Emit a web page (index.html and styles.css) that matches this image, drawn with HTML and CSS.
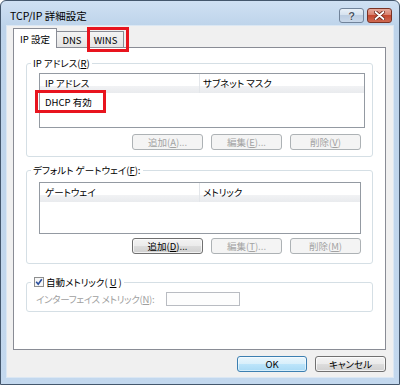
FILE: index.html
```html
<!DOCTYPE html>
<html lang="ja">
<head>
  <meta charset="UTF-8" />
  <title>TCP/IP 詳細設定</title>
  <link rel="stylesheet" href="styles.css">
</head>
<body>

  <div class="window">
    <div class="titlebar">
      <span class="title">TCP/IP 詳細設定</span>
      <div class="caption-buttons">
        <span class="cap-btn help">?</span>
        <span class="cap-btn close">
          <svg width="11" height="9" viewBox="0 0 11 9">
            <path d="M1.5 1 L9.5 8 M9.5 1 L1.5 8" stroke="#6a2418" stroke-width="3.6" stroke-linecap="round" />
            <path d="M1.5 1 L9.5 8 M9.5 1 L1.5 8" stroke="#fff" stroke-width="1.8" stroke-linecap="round" />
          </svg>
        </span>
      </div>
    </div>

    <div class="client">
      <div class="tabs">
        <span class="tab active">IP 設定</span>
        <span class="tab tab-dns">DNS</span>
        <span class="tab tab-wins">WINS</span>
        <span class="mark mark-tab"></span>
      </div>

      <div class="panel">
        <fieldset class="group group-ip">
          <legend>IP アドレス(<u>R</u>)</legend>
          <div class="listview lv-ip">
            <div class="lv-head">
              <span class="col1">IP アドレス</span>
              <span class="col2">サブネット マスク</span>
            </div>
            <div class="lv-row">
              <span class="col1">DHCP 有効</span>
              <span class="mark mark-row"></span>
            </div>
          </div>
          <div class="btn-row">
            <span class="btn disabled">追加(<u>A</u>)...</span>
            <span class="btn disabled">編集(<u>E</u>)...</span>
            <span class="btn disabled">削除(<u>V</u>)</span>
          </div>
        </fieldset>

        <fieldset class="group group-gw">
          <legend>デフォルト ゲートウェイ(<u>F</u>):</legend>
          <div class="listview lv-gw">
            <div class="lv-head">
              <span class="col1">ゲートウェイ</span>
              <span class="col2">メトリック</span>
            </div>
          </div>
          <div class="btn-row">
            <span class="btn">追加(<u>D</u>)...</span>
            <span class="btn disabled">編集(<u>T</u>)...</span>
            <span class="btn disabled">削除(<u>M</u>)</span>
          </div>
        </fieldset>

        <fieldset class="group group-metric">
          <legend>
            <svg class="checkbox" width="10" height="10" viewBox="0 0 10 10">
              <rect x="0.5" y="0.5" width="9" height="9" fill="#f6f6f6" stroke="#8e8f8f" />
              <path d="M2.2 4.8 L4.2 7.2 L7.8 2.2" fill="none" stroke="#2a4f9e" stroke-width="1.6" />
            </svg>
            自動メトリック(<u>U</u>)
          </legend>
          <div class="metric-row">
            <span class="metric-label">インターフェイス メトリック(<u>N</u>):</span>
            <span class="textbox"></span>
          </div>
        </fieldset>
      </div>

      <div class="dialog-buttons">
        <span class="btn default">OK</span>
        <span class="btn">キャンセル</span>
      </div>
    </div>
  </div>

</body>
</html>
```

FILE: styles.css
```css
* {
  box-sizing: border-box;
  margin: 0;
  padding: 0;
}

body {
  font-family: "Noto Sans CJK JP", "Noto Sans", sans-serif;
  font-size: 9.5px;
  font-feature-settings: "palt";
  color: #000;
  background: #fff;
  width: 400px;
  height: 385px;
  overflow: hidden;
}

u {
  text-decoration: underline;
  text-underline-offset: 1px;
}

/* window frame */

.window {
  width: 400px;
  height: 385px;
  border: 1px solid #44576d;
  border-radius: 6px 6px 0 0;
  background: linear-gradient(#cfe0f3, #bdd3ea 26px, #c3d8ee);
  display: flex;
  flex-direction: column;
}

.titlebar {
  height: 25px;
  display: flex;
  align-items: flex-start;
  padding: 0 7px 0 9px;
}

.title {
  padding-top: 8px;
  line-height: 14px;
  font-size: 10.5px;
}

.caption-buttons {
  margin-left: auto;
  margin-top: 7px;
  display: flex;
  gap: 3px;
}

.cap-btn {
  width: 25px;
  height: 15px;
  border-radius: 3px;
  display: flex;
  align-items: center;
  justify-content: center;
}

.help {
  border: 1px solid #71839a;
  background: linear-gradient(#e9f0f8, #d3e0ee 50%, #bccde1 50%, #c9d8ea);
  font-family: "Liberation Sans", sans-serif;
  font-weight: bold;
  font-size: 11px;
  color: #4a5566;
  text-shadow: 0 0 1px #fff, 0 0 1px #fff;
}

.close {
  border: 1px solid #793225;
  background: linear-gradient(#e7aa9c, #d77c69 50%, #c3472f 50%, #cf6a52);
}

.client {
  flex: 1;
  margin: 0 6px 7px;
  background: #f0f0f0;
  padding: 2px 7px 0 6px;
  box-shadow: 0 0 0 1px #dbe7f3;
}

/* tabs */

.tabs {
  display: flex;
  align-items: flex-end;
  height: 20px;
  margin-bottom: -1px;
  position: relative;
  z-index: 1;
}

.tab {
  height: 16px;
  margin-bottom: 1px;
  border: 1px solid #898c95;
  border-bottom: none;
  background: linear-gradient(#f4f4f4, #e4e4e4);
  display: flex;
  align-items: center;
  justify-content: center;
}

.tab.active {
  width: 44px;
  height: 20px;
  margin-bottom: 0;
  background: #fff;
}

.tab-dns {
  width: 31px;
  border-left: none;
}

.tab-wins {
  width: 36px;
  border-left: none;
}

.mark {
  position: absolute;
  border: 3px solid #e8141e;
}

.mark-tab {
  left: 74px;
  top: -1px;
  width: 42px;
  height: 25px;
}

/* panel */

.panel {
  height: 303px;
  border: 1px solid #898c95;
  background: #fff;
  padding: 9px 12px 0;
}

.group {
  border: 1px solid #d5dfe5;
  border-radius: 3px;
}

.group legend {
  margin-left: 4px;
  padding: 0 2px;
  height: 13px;
  line-height: 13px;
}

.group-gw {
  margin-top: 7px;
}

.group-metric {
  margin-top: 11px;
}

.group-metric legend {
  height: 14px;
  line-height: 14px;
  display: flex;
  align-items: center;
  gap: 2px;
  padding-left: 3px;
}

.listview {
  border: 1px solid #949aa2;
  background: #fff;
}

.lv-ip {
  margin: 3px 7px 0 12px;
  height: 55px;
}

.lv-gw {
  margin: 5px 11px 0 12px;
  height: 52px;
}

.lv-head {
  display: flex;
  height: 19px;
  background: linear-gradient(#fff 65%, #f1f2f4 65%, #e9ebee);
}

.lv-head span {
  line-height: 18px;
}

.col1 {
  width: 160px;
  padding-left: 5px;
}

.lv-head .col1 {
  border-right: 1px solid #e3e6ea;
}

.col2 {
  flex: 1;
  padding-left: 3px;
}

.lv-row {
  height: 19px;
  line-height: 19px;
  display: flex;
  position: relative;
}

.mark-row {
  left: -5px;
  top: -3px;
  width: 71px;
  height: 23px;
}

/* buttons */

.btn-row {
  display: flex;
  justify-content: flex-end;
  gap: 8px;
  margin: 6px 11px 6px 0;
}

.group-gw .btn-row {
  margin: 4px 11px 9px 0;
}

.btn {
  width: 71px;
  height: 16px;
  border: 1px solid #707070;
  border-radius: 3px;
  background: linear-gradient(#f3f3f3, #ebebeb 50%, #dddddd 50%, #d0d0d0);
  box-shadow: inset 0 0 0 1px rgba(255, 255, 255, 0.7);
  display: flex;
  align-items: center;
  justify-content: center;
  line-height: 14px;
}

.btn.disabled {
  border-color: #adb2b5;
  background: #f4f4f4;
  color: #a3a3a3;
  box-shadow: none;
}

.btn.default {
  width: 70px;
  border-color: #3c7fb1;
  background: linear-gradient(#e9f6fd, #d8effb 50%, #bde5fb 50%, #a9daf5);
  box-shadow: inset 0 0 0 1px rgba(255, 255, 255, 0.5);
}

.metric-row {
  display: flex;
  align-items: center;
  margin-top: 3px;
  padding: 0 0 5px 9px;
}

.metric-label {
  width: 130px;
  white-space: nowrap;
  letter-spacing: -0.3px;
  color: #a0a0a0;
}

.textbox {
  width: 74px;
  height: 14px;
  border: 1px solid #b9bcc2;
  background: #fdfdfd;
}

.dialog-buttons {
  display: flex;
  justify-content: flex-end;
  gap: 8px;
  margin-top: 6px;
}
```
